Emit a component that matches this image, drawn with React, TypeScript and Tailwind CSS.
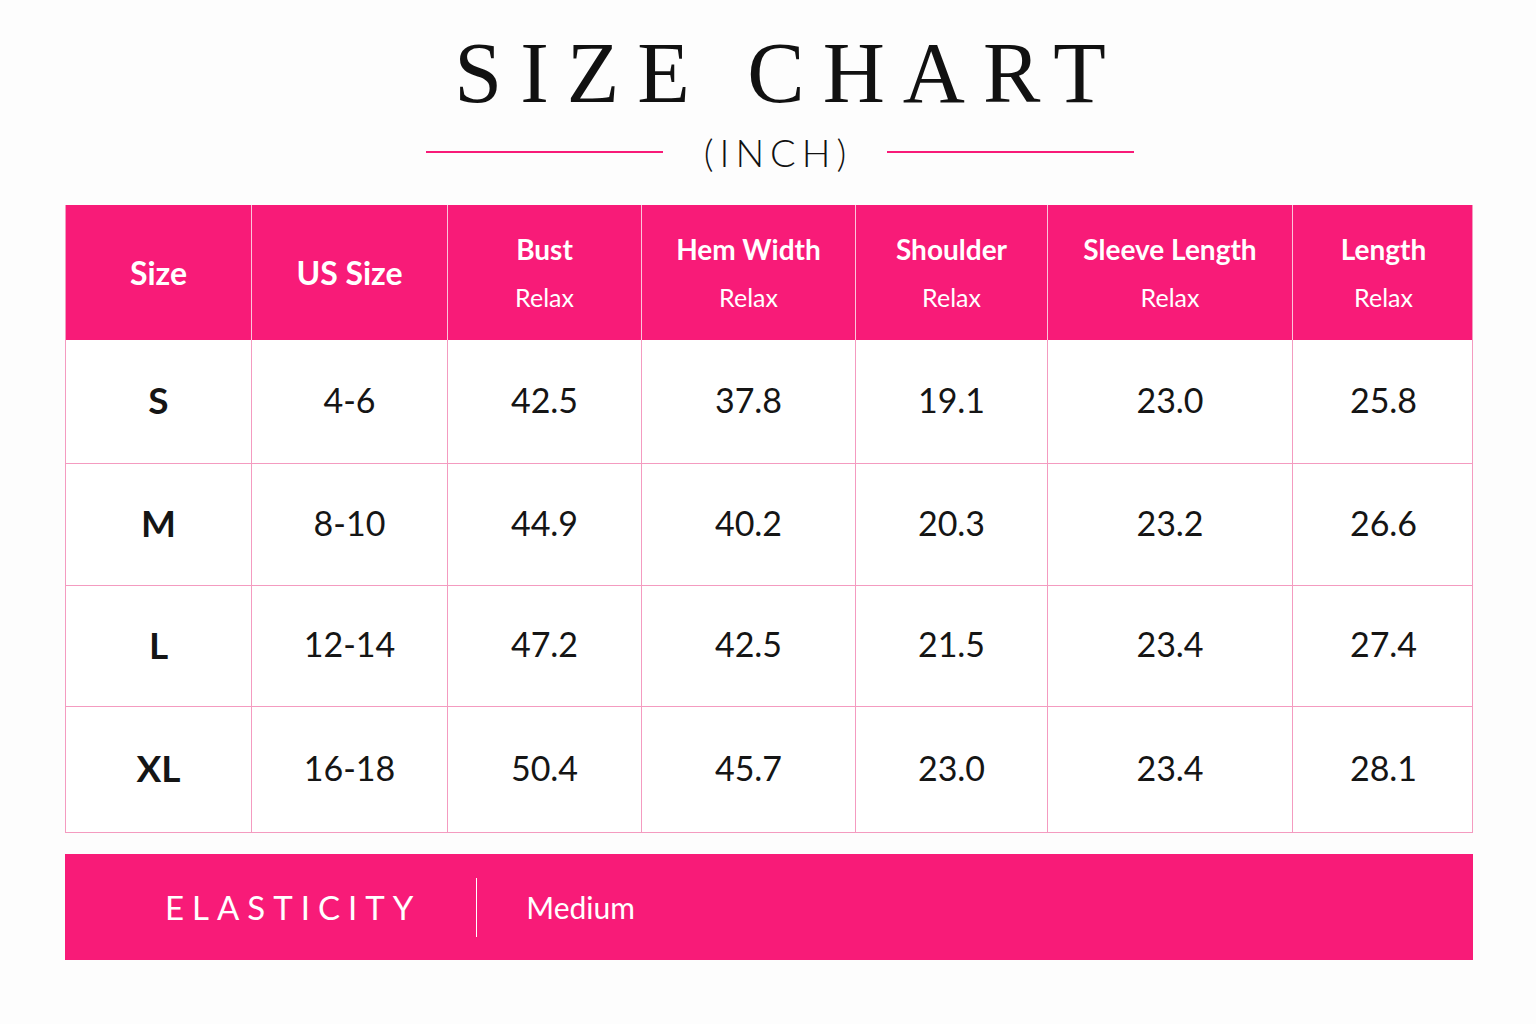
const PINK = "bg-[#f81b78]";

const columns = [
  { title: "Size", sub: "" },
  { title: "US Size", sub: "" },
  { title: "Bust", sub: "Relax" },
  { title: "Hem Width", sub: "Relax" },
  { title: "Shoulder", sub: "Relax" },
  { title: "Sleeve Length", sub: "Relax" },
  { title: "Length", sub: "Relax" },
];

const rows = [
  { h: "h-[124px]", cells: ["S", "4-6", "42.5", "37.8", "19.1", "23.0", "25.8"] },
  { h: "h-[122px]", cells: ["M", "8-10", "44.9", "40.2", "20.3", "23.2", "26.6"] },
  { h: "h-[121px]", cells: ["L", "12-14", "47.2", "42.5", "21.5", "23.4", "27.4"] },
  { h: "h-[125px]", cells: ["XL", "16-18", "50.4", "45.7", "23.0", "23.4", "28.1"] },
];

const gridCols = "grid grid-cols-[186px_196px_194px_214px_192px_245px_181px]";

export default function App() {
  return (
    <div className="min-h-[1024px] w-full bg-[#fdfdfd] font-['Lato',sans-serif] text-[#151515]">
      {/* Title */}
      <div className="flex flex-col items-center pl-[24px] pt-[30px]">
        <h1 className="pl-[18px] font-['Liberation_Serif',serif] text-[86px] font-normal leading-none tracking-[18px] text-[#111]">
          SIZE CHART
        </h1>
        <div className="mt-[17px] flex items-center">
          <div className="h-[2px] w-[237px] bg-[#f81b78]" />
          <div className="mx-[35px] pl-[6px] text-[38px] font-light leading-none tracking-[6px] text-[#111]">
            (INCH)
          </div>
          <div className="h-[2px] w-[247px] bg-[#f81b78]" />
        </div>
      </div>

      {/* Table */}
      <div className="mx-[65px] mt-[34px] w-[1408px] border-x border-b border-[#f49bc0]">
        <div className={`${gridCols} h-[135px] ${PINK}`}>
          {columns.map((c, i) => (
            <div
              key={c.title}
              className={`flex flex-col items-center justify-center text-white ${
                i < columns.length - 1 ? "border-r border-[#fbc3da]" : ""
              }`}
            >
              <div className={`${c.sub ? "text-[28px]" : "text-[32px]"} font-bold leading-none`}>{c.title}</div>
              {c.sub && <div className="mt-[22px] text-[25px] leading-none">{c.sub}</div>}
            </div>
          ))}
        </div>
        {rows.map((r, ri) => (
          <div
            key={r.cells[0]}
            className={`${gridCols} ${r.h} bg-white ${ri < rows.length - 1 ? "border-b border-[#f49bc0]" : ""}`}
          >
            {r.cells.map((v, i) => (
              <div
                key={i}
                className={`flex items-center justify-center pb-[4px] leading-none ${
                  i === 0 ? "text-[37px] font-bold" : "text-[34px] font-normal"
                } ${i < r.cells.length - 1 ? "border-r border-[#f49bc0]" : ""}`}
              >
                {v}
              </div>
            ))}
          </div>
        ))}
      </div>

      {/* Elasticity */}
      <div className={`mx-[65px] mt-[21px] flex h-[106px] w-[1408px] items-center ${PINK} text-white`}>
        <div className="ml-[100px] text-[33px] leading-none tracking-[8px]">ELASTICITY</div>
        <div className="ml-[55px] h-[59px] w-px bg-white" />
        <div className="ml-[49px] text-[30px] leading-none">Medium</div>
      </div>
    </div>
  );
}
